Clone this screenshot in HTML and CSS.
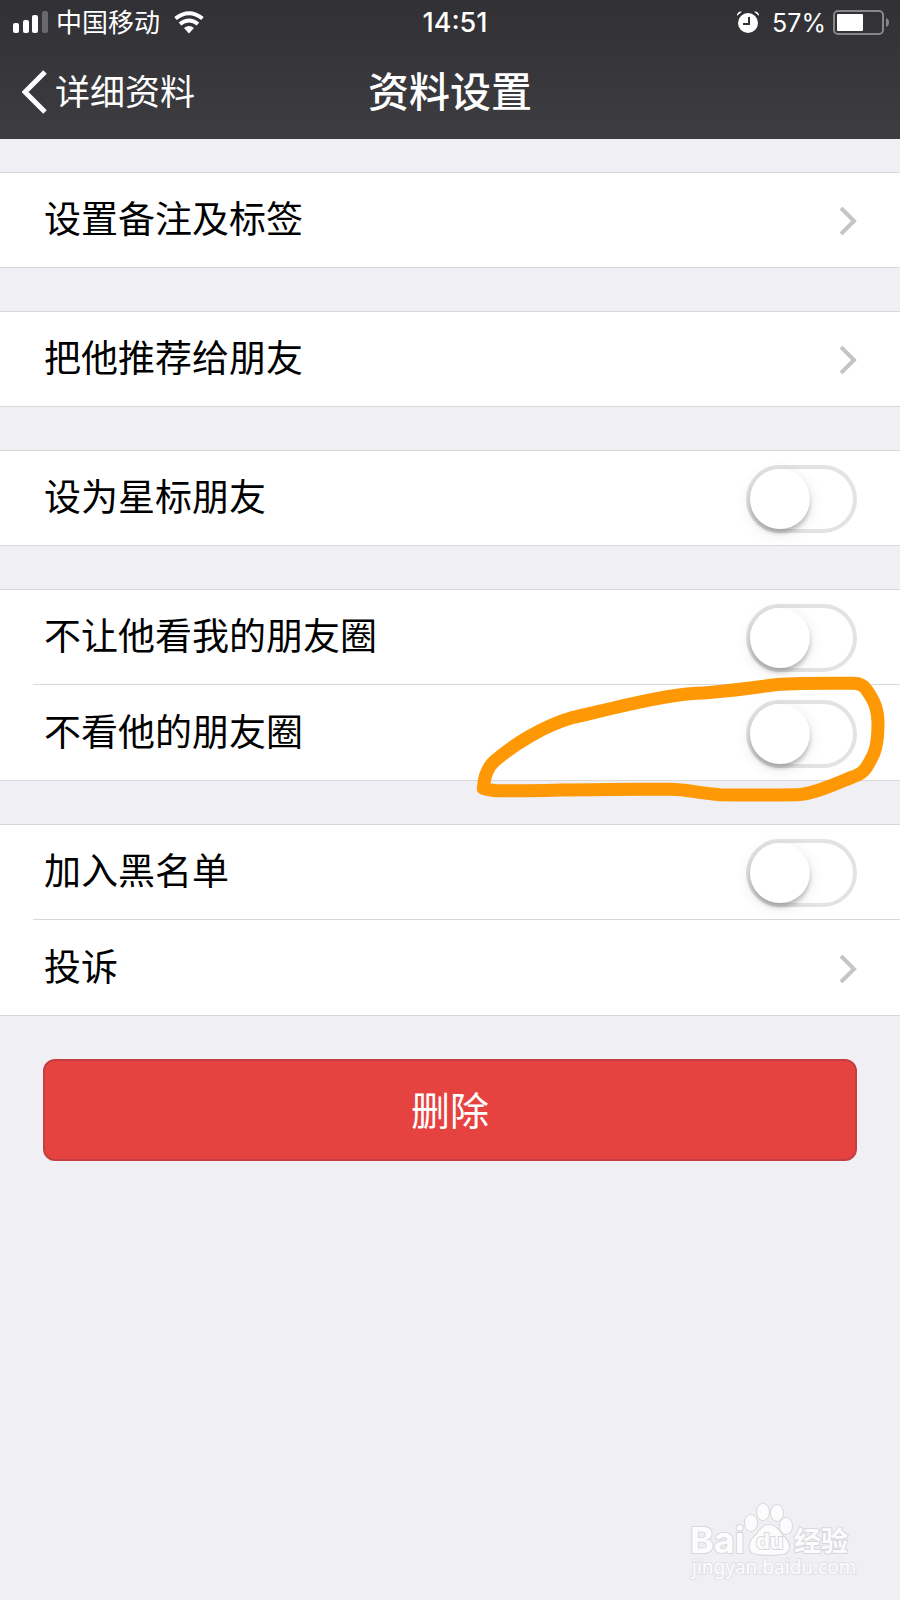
FILE: index.html
```html
<!DOCTYPE html>
<html lang="zh-CN">
<head>
<meta charset="utf-8">
<meta name="viewport" content="width=device-width, initial-scale=1">
<title>资料设置</title>
<link rel="stylesheet" href="styles.css">
</head>
<body class="page">
<header class="header">
  <div class="status">
    <div class="status-left">
      <svg class="signal" width="36" height="24" viewBox="0 0 36 24" aria-hidden="true">
        <g fill="#fff"><rect x="0" y="12" width="6" height="10" rx="2"/><rect x="10" y="9" width="6" height="13" rx="2"/><rect x="19" y="4" width="6" height="18" rx="2"/></g>
        <rect x="29" y="0" width="6" height="22" rx="2" fill="#69696d"/>
      </svg>
      <span class="carrier">中国移动</span>
      <svg class="wifi" width="30" height="24" viewBox="0 0 30 24" aria-hidden="true">
        <g fill="none" stroke="#fff" stroke-width="4"><path d="M1.500 7.500Q15-3 28.500 7.500"/><path d="M6 13Q15 6 24 13"/></g>
        <path d="M10 17Q15 13 20 17L15 22.500Z" fill="#fff"/>
      </svg>
    </div>
    <time class="clock">14:51</time>
    <div class="status-right">
      <svg class="alarm" width="22" height="24" viewBox="0 0 22 24" aria-hidden="true">
        <circle cx="11" cy="12" r="10" fill="#fff"/>
        <path d="M0 5Q0 0 5 0.500ZM22 5Q22 0 17 0.500Z" fill="#fff"/>
        <path d="M12 6V13H6" fill="none" stroke="#333237" stroke-width="2"/>
      </svg>
      <span class="percent">57%</span>
      <svg class="battery" width="56" height="26" viewBox="0 0 56 26" aria-hidden="true">
        <rect x="1" y="1" width="49" height="23" rx="4" fill="none" stroke="#88888b" stroke-width="2"/>
        <rect x="4" y="4" width="26" height="17" rx="1" fill="#fff"/>
        <path d="M53 8Q56 9 56 12.500T53 17Z" fill="#88888b"/>
      </svg>
    </div>
  </div>
  <nav class="nav">
    <a class="back" href="#">
      <svg width="26" height="44" viewBox="0 0 26 44" aria-hidden="true"><path d="M23 2L3 22L23 42" fill="none" stroke="#fff" stroke-width="5"/></svg>
      <span>详细资料</span>
    </a>
    <h1 class="title">资料设置</h1>
  </nav>
</header>

<main class="content">
  <section class="group">
    <a class="row" href="#"><span>设置备注及标签</span><svg class="chevron" width="18" height="28" viewBox="0 0 18 28" aria-hidden="true"><path d="M2 1L15 14L2 27"/></svg></a>
  </section>
  <section class="group">
    <a class="row" href="#"><span>把他推荐给朋友</span><svg class="chevron" width="18" height="28" viewBox="0 0 18 28" aria-hidden="true"><path d="M2 1L15 14L2 27"/></svg></a>
  </section>
  <section class="group">
    <label class="row"><span>设为星标朋友</span><input class="switch" type="checkbox" role="switch"></label>
  </section>
  <section class="group">
    <label class="row"><span>不让他看我的朋友圈</span><input class="switch" type="checkbox" role="switch"></label>
    <label class="row"><span>不看他的朋友圈</span><input class="switch" type="checkbox" role="switch">
      <svg class="marking" width="440" height="160" viewBox="0 0 1320 480" aria-hidden="true">
        <path d="M70 385C72 350 82 322 105 302C160 254 250 198 340 172C440 150 600 106 710 100C800 95 870 84 940 75C1000 68 1080 70 1180 70Q1208 70 1220 90C1245 125 1254 150 1254 190C1254 225 1252 265 1236 292C1220 322 1214 337 1190 346C1140 365 1060 405 1010 404C930 405 850 405 780 404C720 400 680 388 630 388C500 386 300 390 200 392C130 393 95 394 70 385Z"/>
      </svg>
    </label>
  </section>
  <section class="group">
    <label class="row"><span>加入黑名单</span><input class="switch" type="checkbox" role="switch"></label>
    <a class="row" href="#"><span>投诉</span><svg class="chevron" width="18" height="28" viewBox="0 0 18 28" aria-hidden="true"><path d="M2 1L15 14L2 27"/></svg></a>
  </section>
  <button class="delete" type="button">删除</button>
</main>

<footer class="footer">
  <svg class="brand" width="176" height="84" viewBox="0 0 176 84" role="img" aria-label="Baidu 经验 jingyan.baidu.com">
    <g class="brand-shape">
      <ellipse cx="69" cy="23" rx="6" ry="8"/>
      <ellipse cx="81" cy="12" rx="6" ry="8"/>
      <ellipse cx="95" cy="13" rx="6" ry="8"/>
      <ellipse cx="104" cy="26" rx="6" ry="8"/>
      <path d="M87 25C95 25 97 32 102 37C109 43 109 53 100 54C93 55 81 55 75 54C65 53 66 43 72 37C78 32 79 25 87 25Z"/>
    </g>
    <text class="brand-name" x="8" y="53">Bai</text>
    <text class="brand-du" x="74" y="49">du</text>
    <text class="brand-cn" x="112" y="51">经验</text>
    <text class="brand-url" x="10" y="74">jingyan.baidu.com</text>
  </svg>
</footer>
</body>
</html>
```
FILE: styles.css
```css
* { box-sizing: border-box; }

.page {
  margin: 0;
  min-height: 100vh;
  display: flex;
  flex-direction: column;
  background: #efeff4;
  color: #000;
  font-family: Inter, "Noto Sans CJK SC", sans-serif;
}

a { color: inherit; text-decoration: none; }

.header {
  height: 139px;
  background: linear-gradient(#303035, #3d3c41);
  color: #fff;
}

.status {
  height: 46px;
  padding: 0 11px 0 13px;
  display: grid;
  grid-template-columns: 1fr auto 1fr;
  align-items: center;
  font-size: 25px;
  line-height: 46px;
}

.status-left, .status-right { display: flex; align-items: center; }
.status-left { gap: 7px; }
.status-right { justify-content: flex-end; gap: 7px; }
.carrier { font-size: 26px; }
.wifi { margin-left: 7px; }
.alarm { margin-right: 6px; }
.clock { font-size: 27px; font-weight: 500; padding-left: 8px; }

.nav {
  height: 92px;
  padding: 0 22px;
  display: grid;
  grid-template-columns: 1fr auto 1fr;
  align-items: center;
}

.back {
  display: flex;
  align-items: center;
  gap: 7px;
  font-size: 35px;
  line-height: 48px;
}

.title { margin: 0; font-size: 41px; font-weight: 500; line-height: 60px; }

.content {
  padding-top: 33px;
  display: flex;
  flex-direction: column;
  gap: 43px;
}

.group {
  background: #fff;
  border-top: 1px solid #d9d9dc;
  border-bottom: 1px solid #d9d9dc;
}

.row {
  position: relative;
  height: 94px;
  padding: 0 43px 0 44px;
  display: flex;
  align-items: center;
  justify-content: space-between;
  font-size: 37px;
  line-height: 56px;
}

.row + .row { height: 96px; padding-top: 2px; }

.row + .row::before {
  content: "";
  position: absolute;
  top: 0;
  left: 33px;
  right: 0;
  height: 1px;
  background: #d9d9dc;
}

.chevron {
  margin-top: 2px;
  fill: none;
  stroke: #c5c5c9;
  stroke-width: 4;
}

.switch {
  appearance: none;
  margin: 2px 0 0;
  width: 111px;
  height: 68px;
  border: 4px solid #e3e3e3;
  border-radius: 34px;
  background: #fff;
}

.switch::before {
  content: "";
  display: block;
  width: 60px;
  height: 60px;
  border-radius: 50%;
  background: #fff;
  box-shadow: 0 4px 4px rgba(0, 0, 0, 0.22), 0 4px 16px rgba(0, 0, 0, 0.1);
}

.switch:checked { background: #4cd964; border-color: #4cd964; }
.switch:checked::before { margin-left: auto; }

.marking {
  position: absolute;
  top: -24px;
  right: 0;
  z-index: 1;
  pointer-events: none;
  fill: none;
  stroke: #ff9805;
  stroke-width: 39;
  stroke-linejoin: round;
}

.delete {
  margin: 0 43px;
  height: 102px;
  padding: 0 0 4px;
  border: 2px solid #c53f42;
  border-radius: 12px;
  background: #e64340;
  color: #fff;
  font-family: inherit;
  font-size: 39px;
}

.footer {
  margin-top: auto;
  padding: 0 42px 16px 0;
  display: flex;
  justify-content: flex-end;
}

.brand text, .brand-shape {
  fill: #fcfcfd;
  stroke: #d8d8dc;
  stroke-width: 2;
  paint-order: stroke;
}

.brand-name { font: 700 36px Inter, sans-serif; }
.brand text.brand-du { font: 700 22px Inter, sans-serif; }
.brand-cn { font: 700 27px "Noto Sans CJK SC", sans-serif; }
.brand text.brand-url { font: 400 19px "Noto Sans", sans-serif; stroke: #e2e2e6; }
```
